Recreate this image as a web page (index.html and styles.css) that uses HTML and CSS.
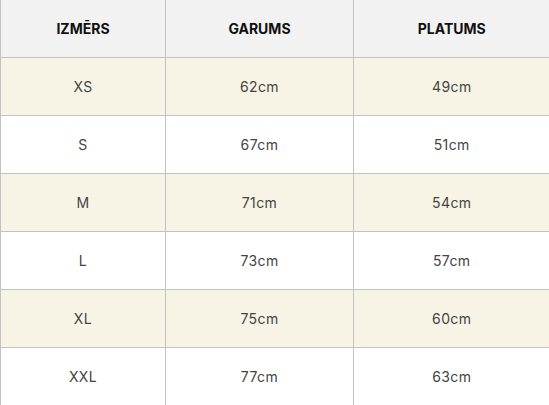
FILE: index.html
```html
<!DOCTYPE html>
<html lang="lv">
<head>
<meta charset="utf-8">
<link rel="stylesheet" href="styles.css">
</head>
<body>
<table class="size-table">
  <colgroup>
    <col class="c1"><col class="c2"><col class="c3">
  </colgroup>
  <thead>
    <tr><th>IZMĒRS</th><th>GARUMS</th><th>PLATUMS</th></tr>
  </thead>
  <tbody>
    <tr class="alt"><td>XS</td><td>62cm</td><td>49cm</td></tr>
    <tr><td>S</td><td>67cm</td><td>51cm</td></tr>
    <tr class="alt"><td>M</td><td>71cm</td><td>54cm</td></tr>
    <tr><td>L</td><td>73cm</td><td>57cm</td></tr>
    <tr class="alt"><td>XL</td><td>75cm</td><td>60cm</td></tr>
    <tr><td>XXL</td><td>77cm</td><td>63cm</td></tr>
  </tbody>
</table>
</body>
</html>
```
FILE: styles.css
```css
html, body {
  margin: 0;
  padding: 0;
  background: #ffffff;
}
body {
  font-family: "Inter", "Open Sans", "DejaVu Sans", sans-serif;
  overflow: hidden;
}
.size-table {
  border-collapse: collapse;
  table-layout: fixed;
  width: 549px;
}
.c1 { width: 165px; }
.c2 { width: 188px; }
.c3 { width: 196px; }
.size-table th,
.size-table td {
  border-left: 1px solid #c2c2c2;
  border-bottom: 1px solid #c2c2c2;
  text-align: center;
  padding: 0;
  font-size: 14px;
}
.size-table th {
  height: 57px;
  background: #f2f2f2;
  color: #111111;
  font-weight: 700;
}
.size-table td {
  height: 57px;
  color: #444444;
  font-weight: 400;
  letter-spacing: 0.4px;
}
.size-table tr.alt td {
  background: #f7f4e5;
}
```
